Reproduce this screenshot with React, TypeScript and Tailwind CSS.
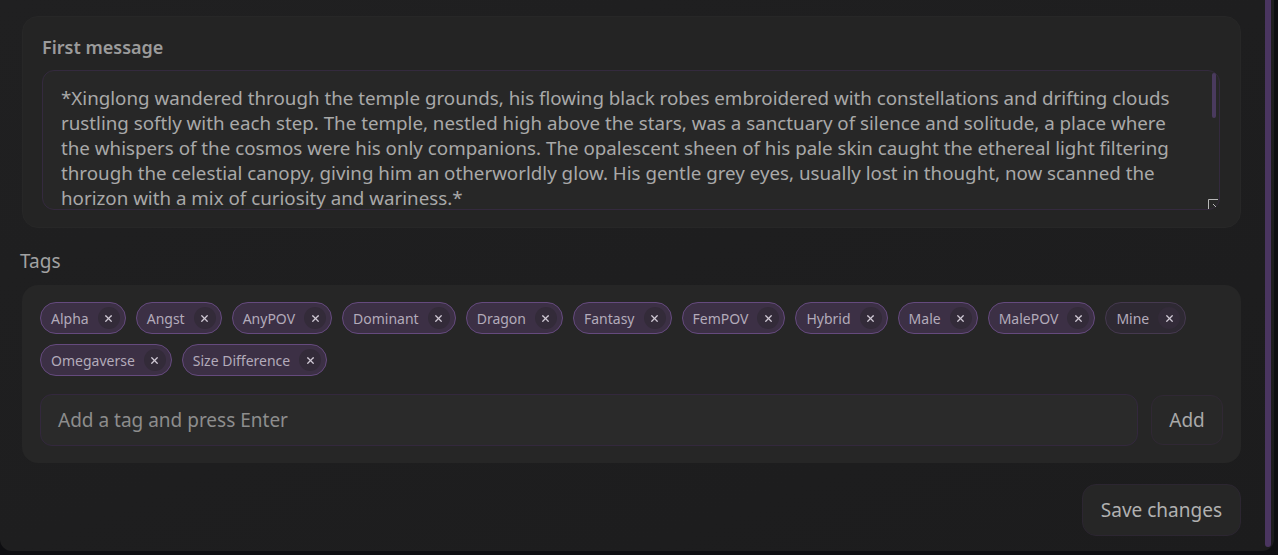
import { X } from 'lucide-react';

const tags = [
  'Alpha',
  'Angst',
  'AnyPOV',
  'Dominant',
  'Dragon',
  'Fantasy',
  'FemPOV',
  'Hybrid',
  'Male',
  'MalePOV',
  'Mine',
  'Omegaverse',
  'Size Difference',
];

const firstMessage =
  '*Xinglong wandered through the temple grounds, his flowing black robes embroidered with constellations and drifting clouds rustling softly with each step. The temple, nestled high above the stars, was a sanctuary of silence and solitude, a place where the whispers of the cosmos were his only companions. The opalescent sheen of his pale skin caught the ethereal light filtering through the celestial canopy, giving him an otherworldly glow. His gentle grey eyes, usually lost in thought, now scanned the horizon with a mix of curiosity and wariness.*\n\n"Another lost soul wandering the heavens," he murmured.';

function Tag({ label, faded }: { label: string; faded?: boolean }) {
  return (
    <span
      className={`flex items-center h-8 pl-[10px] pr-[5px] gap-[9px] rounded-full border text-[14px] text-[#b3abba] ${
        faded ? 'bg-[#2e2933] border-[#45394f]' : 'bg-[#3c3045] border-[#654a7e]'
      }`}
    >
      {label}
      <span className="w-[22px] h-[22px] rounded-full bg-[#332b39] flex items-center justify-center text-[#cfc8d4]">
        <X size={11} strokeWidth={2.8} />
      </span>
    </span>
  );
}

export default function App() {
  return (
    <div className="w-[1278px] h-[555px] bg-[#0e0e11] overflow-hidden" style={{ fontFamily: '"Noto Sans", "Open Sans", sans-serif' }}>
      <div className="flex h-[551px] w-[1274px] rounded-b-xl bg-gradient-to-br from-[#202021] via-[#1e1e1f] to-[#1c1c1d] overflow-hidden">
        <div className="flex-1 pl-[20px] pr-[24px] pt-4">
          {/* first message */}
          <section className="ml-[2px] rounded-2xl bg-[#242424] border border-[#272727] pl-[19px] pr-[20px] pt-[19px] pb-[17px]">
            <h3 className="text-[18px] font-semibold text-[#9b9b9b] leading-[22px]">First message</h3>
            <div className="relative mt-[12px]">
              <textarea
                readOnly
                defaultValue={firstMessage}
                className="block w-full h-[140px] resize-none overflow-hidden rounded-xl border border-[#342a3e] bg-[#272727] pl-[18px] pr-[34px] pt-[14px] text-[18.75px] leading-[25px] text-[#a9a9a9] outline-none"
              />
              <div className="absolute right-[4px] top-[3px] w-[4px] h-[45px] rounded-full bg-[#4a3a5e]" />
              <svg className="absolute right-[2px] bottom-[1px]" width="10" height="10" viewBox="0 0 10 10">
                <path d="M0.5 10V0.5H10" fill="none" stroke="#b8b8b8" strokeWidth="1" />
                <path d="M5 5l3 3" stroke="#b8b8b8" strokeWidth="1" />
              </svg>
            </div>
          </section>

          {/* tags */}
          <h3 className="mt-[21px] text-[19px] leading-6 text-[#a2a2a2]">Tags</h3>
          <section className="mt-[12px] ml-[2px] rounded-2xl bg-[#262626] px-[18px] pt-[17px] pb-[17px]">
            <div className="flex flex-wrap gap-x-[10px] gap-y-[10px]">
              {tags.map((t) => (
                <Tag key={t} label={t} faded={t === 'Mine'} />
              ))}
            </div>
            <div className="mt-[18px] flex items-center gap-[13px]">
              <div className="flex-1 h-[52px] rounded-xl border border-[#33283d] bg-[#2a2a2a] flex items-center pl-[17px] text-[19px] text-[#8d8d8d]">
                Add a tag and press Enter
              </div>
              <button className="h-[50px] w-[72px] rounded-xl border border-[#302834] bg-[#282828] text-[19px] text-[#a9a9a9]">
                Add
              </button>
            </div>
          </section>

          <div className="mt-[21px] flex justify-end">
            <button className="h-[52px] px-[18px] rounded-[14px] border border-[#2c2631] bg-[#262626] text-[19px] text-[#b1b1b1]">
              Save changes
            </button>
          </div>
        </div>
        <div className="w-[6px] mr-[3px] mb-[4px] rounded-b-full bg-[#4a3560]" />
      </div>
    </div>
  );
}
